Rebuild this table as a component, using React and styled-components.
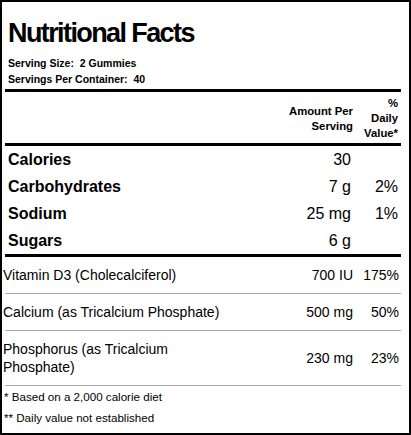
import styled, { createGlobalStyle } from "styled-components";

const GlobalStyle = createGlobalStyle`
  html, body {
    margin: 0;
    padding: 0;
    background: #fff;
  }
  body {
    font-family: "Liberation Sans", Arial, sans-serif;
    color: #000;
  }
`;

const Label = styled.div`
  box-sizing: border-box;
  width: 411px;
  height: 435px;
  border: 2px solid #000;
  padding: 0 8px 0 1px;
  display: flex;
  flex-direction: column;
`;

const Top = styled.header`
  padding: 16px 0 2px 5px;
`;

const Title = styled.h1`
  margin: 0;
  font-size: 27px;
  line-height: 31px;
  font-weight: 700;
  letter-spacing: -1.6px;
`;

const Serving = styled.div`
  margin-top: 6px;
  font-size: 10.5px;
  line-height: 16px;
  font-weight: 700;
`;

const Rule = styled.div`
  height: 3px;
  margin-left: 2px;
  background: #000;
`;

const HeadRow = styled.div`
  display: grid;
  grid-template-columns: 1fr auto 45px;
  align-items: center;
  padding: 4px 3px 2px 0;
  font-size: 11.3px;
  line-height: 15px;
  font-weight: 700;
  text-align: right;
`;

const MainRow = styled.div`
  display: grid;
  grid-template-columns: 1fr auto 47px;
  align-items: center;
  height: 27px;
  padding: 0 3px 0 5px;
  font-size: 16px;
  line-height: 19px;
`;

const MainName = styled.span`
  font-weight: 700;
`;

const Value = styled.span`
  text-align: right;
`;

const NutrientRow = styled.div`
  display: grid;
  grid-template-columns: 230px 1fr 46px;
  align-items: center;
  margin-left: 2px;
  padding: 9px 2px 9px 0;
  border-bottom: 1px solid #aaa;
  font-size: 14px;
  line-height: 18px;
`;

const NutrientName = styled.span`
  margin-left: -2px;
`;

const Footnotes = styled.div`
  padding-left: 1px;
  font-size: 11.6px;
  line-height: 21px;
`;

const main = [
  { name: "Calories", amount: "30", dv: "" },
  { name: "Carbohydrates", amount: "7 g", dv: "2%" },
  { name: "Sodium", amount: "25 mg", dv: "1%" },
  { name: "Sugars", amount: "6 g", dv: "" },
];

const nutrients = [
  { name: "Vitamin D3 (Cholecalciferol)", amount: "700 IU", dv: "175%" },
  { name: "Calcium (as Tricalcium Phosphate)", amount: "500 mg", dv: "50%" },
  { name: "Phosphorus (as Tricalcium Phosphate)", amount: "230 mg", dv: "23%" },
];

const App = () => {
  return (
    <>
      <GlobalStyle />
      <Label>
        <Top>
          <Title>Nutritional Facts</Title>
          <Serving>
            <div>{"Serving Size:\u00a0 2 Gummies"}</div>
            <div>{"Servings Per Container:\u00a0 40"}</div>
          </Serving>
        </Top>
        <Rule />
        <HeadRow>
          <span />
          <span>
            Amount Per
            <br />
            Serving
          </span>
          <span>
            %
            <br />
            Daily
            <br />
            Value*
          </span>
        </HeadRow>
        <Rule />
        {main.map((item) => (
          <MainRow key={item.name}>
            <MainName>{item.name}</MainName>
            <Value>{item.amount}</Value>
            <Value>{item.dv}</Value>
          </MainRow>
        ))}
        <Rule />
        {nutrients.map((item) => (
          <NutrientRow key={item.name}>
            <NutrientName>{item.name}</NutrientName>
            <Value>{item.amount}</Value>
            <Value>{item.dv}</Value>
          </NutrientRow>
        ))}
        <Footnotes>
          <div>* Based on a 2,000 calorie diet</div>
          <div>** Daily value not established</div>
        </Footnotes>
      </Label>
    </>
  );
};

export default App;
